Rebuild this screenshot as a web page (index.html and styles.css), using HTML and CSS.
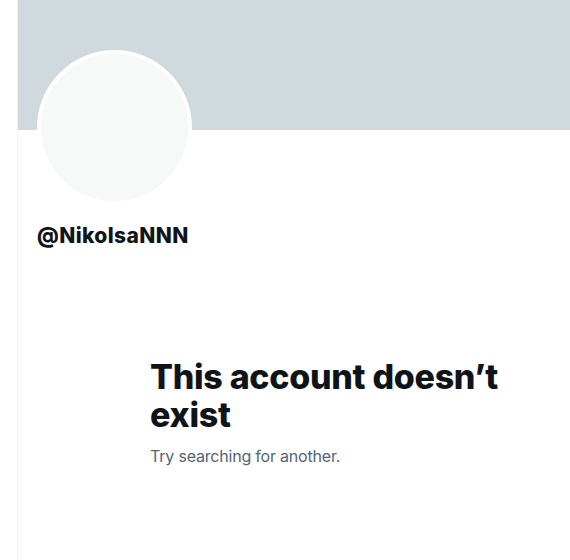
FILE: index.html
```html
<!DOCTYPE html>
<html lang="en">
<head>
    <meta charset="UTF-8">
    <meta name="viewport" content="width=device-width, initial-scale=1.0">
    <title>Profile</title>
    <link rel="stylesheet" href="styles.css">
</head>
<body>
    <main class="profile">
        <div class="banner"></div>
        <div class="profile-head">
            <div class="avatar"></div>
            <h2 class="handle">@NikolsaNNN</h2>
        </div>

        <!-- Empty state -->
        <div class="empty-state">
            <h1>This account doesn’t exist</h1>
            <p>Try searching for another.</p>
        </div>
    </main>
</body>
</html>
```

FILE: styles.css
```css
/* General Styles */
body {
    font-family: 'Inter', 'Segoe UI', sans-serif;
    margin: 0;
    padding: 0;
    background: white;
    color: #0f1419;
    overflow: hidden;
}

.profile {
    margin-left: 17px;
    min-height: 560px;
    border-left: 1px solid #eff3f4;
}

.banner {
    height: 130px;
    background-color: #cfd9de;
}

.profile-head {
    padding: 0 19px;
}

.avatar {
    width: 147px;
    height: 147px;
    margin-top: -80px;
    border: 4px solid white;
    border-radius: 50%;
    background-color: #f7f9f9;
}

.handle {
    margin: 19px 0 0;
    font-size: 21px;
    font-weight: 800;
    line-height: 24px;
    letter-spacing: 0.4px;
}

/* Empty state */
.empty-state {
    margin: 110px 0 0 132px;
    max-width: 380px;
}

.empty-state h1 {
    margin: 0;
    font-size: 34px;
    font-weight: 800;
    line-height: 38px;
    letter-spacing: -0.3px;
}

.empty-state p {
    margin: 12px 0 0;
    font-size: 16px;
    line-height: 20px;
    letter-spacing: -0.2px;
    color: #536471;
}
```
